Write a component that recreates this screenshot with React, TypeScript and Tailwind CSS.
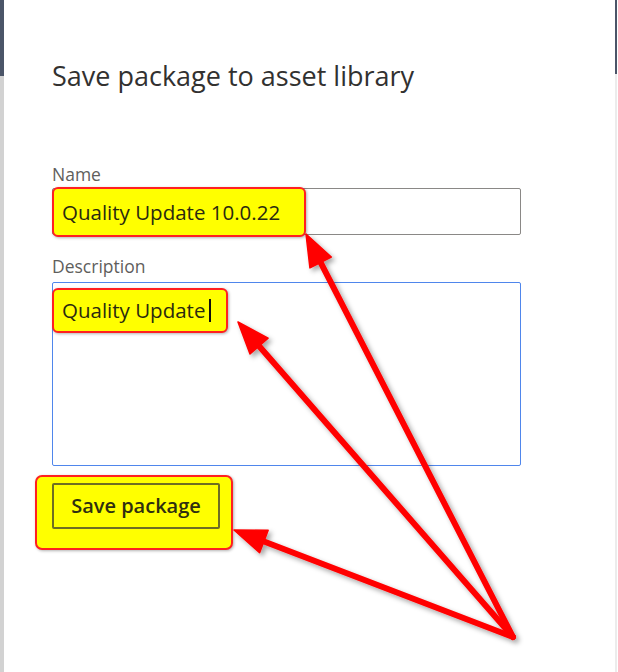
import React from 'react';

type Arrow = { tip: [number, number] };

const ORIGIN: [number, number] = [513, 637];

// tips of the three annotation arrows
const arrows: Arrow[] = [
  { tip: [306, 234] },
  { tip: [238, 322] },
  { tip: [234, 530] },
];

function arrowGeometry(tip: [number, number], headLen = 32, halfW = 12) {
  const dx = tip[0] - ORIGIN[0];
  const dy = tip[1] - ORIGIN[1];
  const len = Math.sqrt(dx * dx + dy * dy);
  const ux = dx / len;
  const uy = dy / len;
  const bx = tip[0] - ux * headLen;
  const by = tip[1] - uy * headLen;
  const nx = -uy;
  const ny = ux;
  const head = `${tip[0]},${tip[1]} ${bx + nx * halfW},${by + ny * halfW} ${bx - nx * halfW},${by - ny * halfW}`;
  return { bx: bx + ux * 4, by: by + uy * 4, head };
}

function Annotations() {
  return (
    <svg
      className="absolute inset-0 pointer-events-none"
      width={618}
      height={672}
      viewBox="0 0 618 672"
    >
      <defs>
        <filter id="shadow" x="-20%" y="-20%" width="140%" height="140%">
          <feDropShadow dx="3" dy="3" stdDeviation="2.5" floodColor="#000" floodOpacity="0.35" />
        </filter>
      </defs>
      <g filter="url(#shadow)">
        {arrows.map((a, i) => {
          const g = arrowGeometry(a.tip);
          return (
            <g key={i}>
              <line
                x1={ORIGIN[0]}
                y1={ORIGIN[1]}
                x2={g.bx}
                y2={g.by}
                stroke="#ff0000"
                strokeWidth={6}
                strokeLinecap="round"
              />
              <polygon points={g.head} fill="#ff0000" stroke="#ff0000" strokeWidth={1.5} strokeLinejoin="round" />
            </g>
          );
        })}
      </g>
    </svg>
  );
}

export default function App() {
  return (
    <div className="relative flex w-[618px] h-[672px] bg-white font-['Open_Sans',sans-serif] overflow-hidden">
      {/* left page edge */}
      <div className="flex flex-col w-[4px]">
        <div className="h-[76px] bg-[#4b5568]" />
        <div className="flex-1 bg-[#d2d2d2]" />
      </div>

      {/* Panel */}
      <div className="flex-1 flex flex-col pl-[48px]">
        <h1 className="mt-[60px] h-[32px] leading-[32px] text-[27px] text-[#323130]">
          Save package to asset library
        </h1>

        <label className="mt-[70px] h-[24px] leading-[24px] text-[17.5px] text-[#605e5c]">
          Name
        </label>
        <div className="relative mt-[2px] w-[469px] h-[47px] border border-[#8a8886] rounded-[2px]">
          <div className="absolute -left-px -top-[2px] w-[254px] h-[50px] flex items-center pl-[8px] bg-[#ffff00] border-[2.5px] border-[#ff2020] rounded-[6px] shadow-[1px_1px_3px_rgba(0,0,0,0.3)]">
            <span className="text-[20.5px] leading-none text-[#2a2a10]">Quality Update 10.0.22</span>
          </div>
        </div>

        <label className="mt-[19px] h-[24px] leading-[24px] text-[17.5px] text-[#605e5c]">
          Description
        </label>
        <div className="relative mt-[4px] w-[469px] h-[184px] border border-[#4f86ec] rounded-[2px]">
          <div className="absolute -left-px top-[5px] w-[176px] h-[45px] flex items-center pl-[8px] bg-[#ffff00] border-[2.5px] border-[#ff2020] rounded-[6px] shadow-[1px_1px_3px_rgba(0,0,0,0.3)]">
            <span className="text-[20.5px] leading-none text-[#2a2a10]">Quality Update</span>
            <span className="ml-[4px] w-[2px] h-[23px] bg-[#111]" />
          </div>
        </div>

        <div className="mt-[9px] -ml-[17px] w-[198px] h-[75px] flex pl-[15px] pt-[6px] bg-[#ffff00] border-[2.5px] border-[#ff2020] rounded-[7px] shadow-[1px_1px_3px_rgba(0,0,0,0.3)]">
          <button className="w-[168px] h-[46px] flex items-center justify-center border-2 border-[#6f6e22] rounded-[2px] text-[20px] font-semibold text-[#2f2f10]">
            Save package
          </button>
        </div>
      </div>

      {/* right page edge */}
      <div className="flex flex-col w-[2px] mr-px">
        <div className="h-[74px] bg-[#4b5568]" />
        <div className="flex-1 bg-[#ececec]" />
      </div>

      <Annotations />
    </div>
  );
}
